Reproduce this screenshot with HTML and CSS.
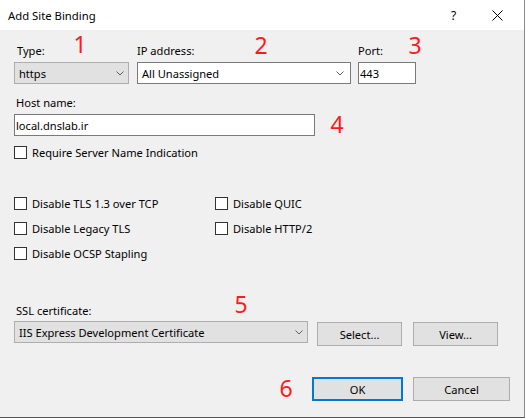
FILE: index.html
```html
<!DOCTYPE html>
<html>
<head>
<meta charset="utf-8">
<link rel="stylesheet" href="styles.css">
</head>
<body>
<div class="window">
  <div class="titlebar">
    <span class="title">Add Site Binding</span>
    <span class="help">?</span>
    <span class="close"><svg width="11" height="11" viewBox="0 0 11 11"><path d="M0.5 0.5L10.5 10.5M10.5 0.5L0.5 10.5" stroke="#000" stroke-width="1" fill="none"/></svg></span>
  </div>
  <div class="content">
    <div class="row1">
      <div class="field f-type">
        <div class="lbl lbl-type">Type:</div>
        <div class="combo gray"><span>https</span><svg class="chev" width="8" height="5" viewBox="0 0 8 5"><polyline points="0.5,0.5 4,4 7.5,0.5" fill="none" stroke="#606060" stroke-width="1"/></svg></div>
      </div>
      <div class="field f-ip">
        <div class="lbl">IP address:</div>
        <div class="combo white"><span>All Unassigned</span><svg class="chev" width="8" height="5" viewBox="0 0 8 5"><polyline points="0.5,0.5 4,4 7.5,0.5" fill="none" stroke="#606060" stroke-width="1"/></svg></div>
      </div>
      <div class="field f-port">
        <div class="lbl">Port:</div>
        <div class="textbox">443</div>
      </div>
    </div>

    <div class="field f-host">
      <div class="lbl lbl-host">Host name:</div>
      <div class="textbox">local.dnslab.ir</div>
    </div>

    <div class="check sni"><span class="box"></span><span>Require Server Name Indication</span></div>

    <div class="opts">
      <div class="check"><span class="box"></span><span>Disable TLS 1.3 over TCP</span></div>
      <div class="check"><span class="box"></span><span>Disable QUIC</span></div>
      <div class="check"><span class="box"></span><span>Disable Legacy TLS</span></div>
      <div class="check"><span class="box"></span><span>Disable HTTP/2</span></div>
      <div class="check"><span class="box"></span><span>Disable OCSP Stapling</span></div>
    </div>

    <div class="ssl">
      <div class="lbl lbl-host">SSL certificate:</div>
      <div class="ssl-row">
        <div class="combo gray ssl-combo"><span>IIS Express Development Certificate</span><svg class="chev" width="8" height="5" viewBox="0 0 8 5"><polyline points="0.5,0.5 4,4 7.5,0.5" fill="none" stroke="#606060" stroke-width="1"/></svg></div>
        <div class="btn btn-select">Select...</div>
        <div class="btn btn-view">View...</div>
      </div>
    </div>

    <div class="footer">
      <div class="btn btn-ok">OK</div>
      <div class="btn btn-cancel">Cancel</div>
    </div>
  </div>

  <span class="mark m1">1</span>
  <span class="mark m2">2</span>
  <span class="mark m3">3</span>
  <span class="mark m4">4</span>
  <span class="mark m5">5</span>
  <span class="mark m6">6</span>
</div>
</body>
</html>
```

FILE: styles.css
```css
html, body {
  margin: 0;
  padding: 0;
  background: #ffffff;
}

body {
  font-family: "Noto Sans", "DejaVu Sans", sans-serif;
  font-size: 11.1px;
  line-height: 15px;
  color: #000;
}

.window {
  position: relative;
  width: 524px;
  height: 417px;
  border-right: 1px solid #8a8a8a;
  border-bottom: 1px solid #555555;
  background: #f0f0f0;
  display: flex;
  flex-direction: column;
  overflow: hidden;
}

.titlebar {
  height: 30px;
  background: #ffffff;
  display: flex;
  align-items: center;
  flex-shrink: 0;
}

.title {
  padding-left: 8px;
  flex: 1;
  font-size: 11.3px;
}

.help {
  font-size: 12px;
  width: 10px;
  margin-right: 31px;
}

.close {
  display: flex;
  width: 11px;
  height: 11px;
  margin-right: 21px;
}

.content {
  padding: 13px 14px 0 14px;
  display: flex;
  flex-direction: column;
}

.row1 {
  display: flex;
}

.field {
  display: flex;
  flex-direction: column;
}

.lbl {
  height: 15px;
  margin-bottom: 4px;
}

.lbl-type { padding-left: 3px; }
.lbl-host { padding-left: 2px; }

.f-type { width: 115px; }
.f-ip { width: 214px; margin-left: 8px; }
.f-port { width: 58px; margin-left: 7px; }

.combo {
  box-sizing: border-box;
  height: 22px;
  border: 1px solid #adadad;
  display: flex;
  align-items: center;
  justify-content: space-between;
  padding: 0 4px 0 4px;
}

.combo.gray {
  background: #e1e1e1;
}

.combo.white {
  background: #ffffff;
  border-color: #7a7a7a;
  padding-right: 6px;
}

.chev {
  display: block;
  flex-shrink: 0;
}

.textbox {
  box-sizing: border-box;
  height: 22px;
  border: 1px solid #7a7a7a;
  background: #ffffff;
  display: flex;
  align-items: center;
  padding: 0 1px;
}

.f-host {
  margin-top: 11px;
  width: 301px;
}

.check {
  display: flex;
  align-items: center;
  height: 13px;
  line-height: 13px;
}

.box {
  box-sizing: border-box;
  width: 13px;
  height: 13px;
  border: 1px solid #333333;
  background: #ffffff;
  margin-right: 5px;
  flex-shrink: 0;
}

.sni {
  margin-top: 10px;
}

.opts {
  margin-top: 38px;
  display: grid;
  grid-template-columns: 201px auto;
  row-gap: 12px;
}

.ssl {
  margin-top: 43px;
  display: flex;
  flex-direction: column;
}

.ssl .lbl {
  margin-bottom: 3px;
}

.ssl-row {
  display: flex;
  align-items: flex-start;
}

.ssl-combo {
  width: 294px;
}

.btn {
  box-sizing: border-box;
  height: 24px;
  background: #e1e1e1;
  border: 1px solid #adadad;
  display: flex;
  align-items: center;
  justify-content: center;
}

.btn-select {
  width: 85px;
  margin-left: 9px;
  margin-top: 1px;
}

.btn-view {
  width: 85px;
  margin-left: 11px;
  margin-top: 1px;
}

.footer {
  margin-top: 31px;
  display: flex;
  justify-content: flex-end;
}

.btn-ok {
  width: 91px;
  border: 2px solid #0078d7;
}

.btn-cancel {
  width: 97px;
  margin-left: 10px;
}

.mark {
  position: absolute;
  width: 20px;
  text-align: center;
  font-size: 23px;
  line-height: 23px;
  color: #ff1a1a;
}

.m1 { left: 70px; top: 33px; }
.m2 { left: 251px; top: 34px; }
.m3 { left: 405px; top: 34px; }
.m4 { left: 327px; top: 113px; }
.m5 { left: 231px; top: 293px; }
.m6 { left: 276px; top: 377px; }
```
